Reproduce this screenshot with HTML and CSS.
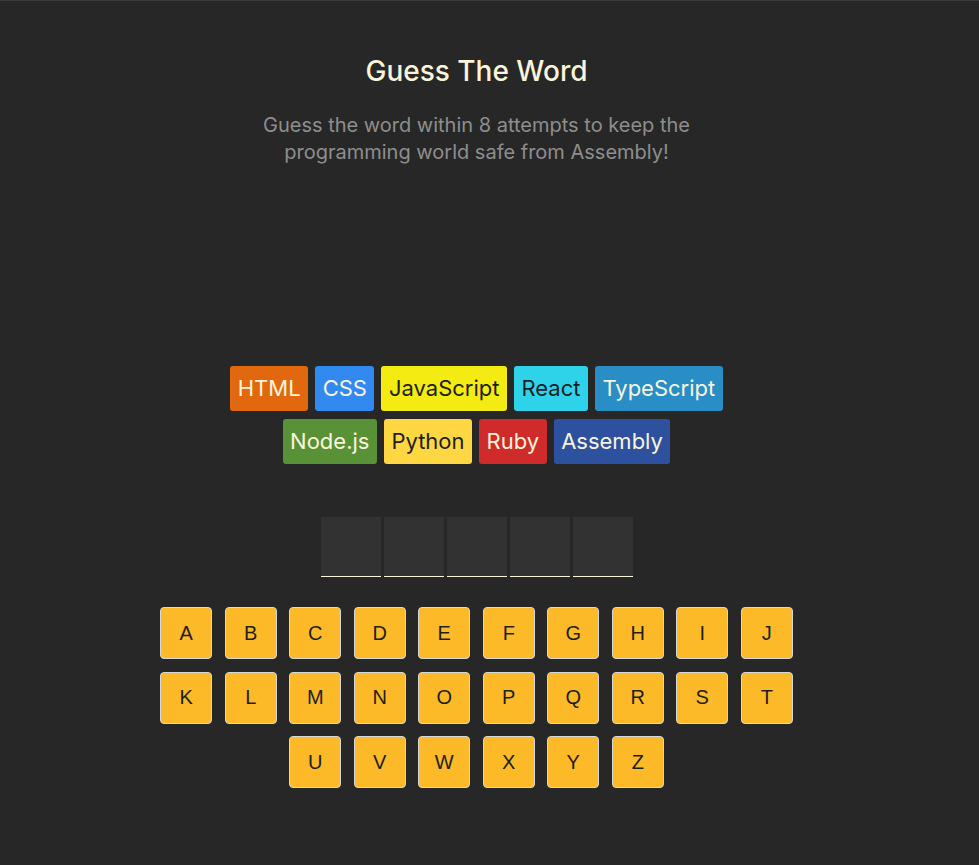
FILE: index.html
```html
<!DOCTYPE html>
<html lang="en">
<head>
<meta charset="utf-8">
<title>Guess The Word</title>
<link rel="stylesheet" href="styles.css">
</head>
<body>
<main class="game">
  <header class="intro">
    <h1 class="title">Guess The Word</h1>
    <p class="subtitle">Guess the word within 8 attempts to keep the programming world safe from Assembly!</p>
  </header>
  <section class="status"></section>
  <section class="chips">
    <span class="chip chip-html">HTML</span>
    <span class="chip chip-css">CSS</span>
    <span class="chip chip-js">JavaScript</span>
    <span class="chip chip-react">React</span>
    <span class="chip chip-ts">TypeScript</span>
    <span class="chip chip-node">Node.js</span>
    <span class="chip chip-python">Python</span>
    <span class="chip chip-ruby">Ruby</span>
    <span class="chip chip-asm">Assembly</span>
  </section>
  <section class="word">
    <span class="letter"></span>
    <span class="letter"></span>
    <span class="letter"></span>
    <span class="letter"></span>
    <span class="letter"></span>
  </section>
  <section class="keyboard">
    <button class="key">A</button>
    <button class="key">B</button>
    <button class="key">C</button>
    <button class="key">D</button>
    <button class="key">E</button>
    <button class="key">F</button>
    <button class="key">G</button>
    <button class="key">H</button>
    <button class="key">I</button>
    <button class="key">J</button>
    <button class="key">K</button>
    <button class="key">L</button>
    <button class="key">M</button>
    <button class="key">N</button>
    <button class="key">O</button>
    <button class="key">P</button>
    <button class="key">Q</button>
    <button class="key">R</button>
    <button class="key">S</button>
    <button class="key">T</button>
    <button class="key">U</button>
    <button class="key">V</button>
    <button class="key">W</button>
    <button class="key">X</button>
    <button class="key">Y</button>
    <button class="key">Z</button>
  </section>
</main>
</body>
</html>
```

FILE: styles.css
```css
* {
  box-sizing: border-box;
}

html, body {
  margin: 0;
  padding: 0;
}

body {
  background: #272727;
  border-top: 1px solid #3c3c3c;
  min-height: 865px;
  font-family: Inter, "Noto Sans", sans-serif;
  color: #F9F4DA;
}

.game {
  width: 953px;
  display: flex;
  flex-direction: column;
  align-items: center;
}

.intro {
  display: flex;
  flex-direction: column;
  align-items: center;
  text-align: center;
  padding-top: 52px;
}

.title {
  margin: 0;
  font-size: 28px;
  font-weight: 500;
  line-height: 36px;
  color: #F9F4DA;
}

.subtitle {
  margin: 23px 0 0;
  max-width: 460px;
  font-size: 20px;
  line-height: 27px;
  color: #8E8E8E;
}

.status {
  height: 200px;
}

.chips {
  display: flex;
  flex-wrap: wrap;
  justify-content: center;
  column-gap: 7px;
  row-gap: 8px;
  max-width: 530px;
}

.chip {
  padding: 7px 7.5px;
  border-radius: 3px;
  font-size: 22px;
  line-height: 31px;
  color: #F9F4DA;
}

.chip-html { background: #E2680F; }
.chip-css { background: #328AF1; }
.chip-js { background: #F4EB13; color: #1E1E1E; }
.chip-react { background: #2ED3E9; color: #1E1E1E; }
.chip-ts { background: #298EC6; }
.chip-node { background: #599137; }
.chip-python { background: #FFD742; color: #1E1E1E; }
.chip-ruby { background: #D02B2B; }
.chip-asm { background: #2D519F; }

.word {
  display: flex;
  gap: 3px;
  margin-top: 53px;
}

.letter {
  width: 60px;
  height: 60px;
  background: #323232;
  border-bottom: 1px solid #F9F4DA;
}

.keyboard {
  display: flex;
  flex-wrap: wrap;
  justify-content: center;
  gap: 12.5px;
  max-width: 660px;
  margin-top: 30px;
}

.key {
  width: 52px;
  height: 52px;
  padding: 0;
  background: #FCBA29;
  border: 1px solid #D7D7D7;
  border-radius: 4px;
  font-family: "Liberation Sans", Arial, sans-serif;
  font-size: 20px;
  color: #1E1E1E;
}
```
